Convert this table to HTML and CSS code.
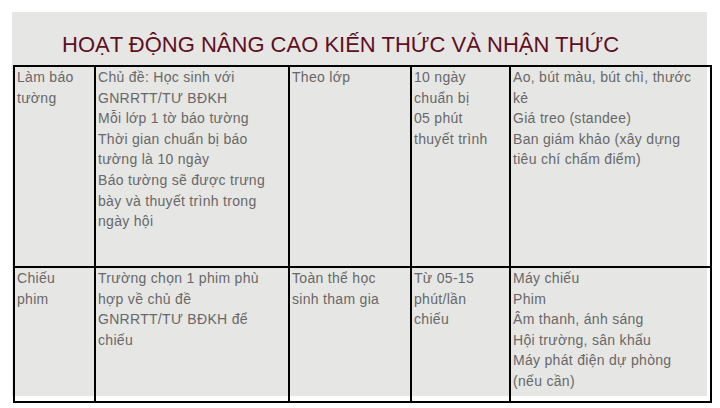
FILE: index.html
```html
<!DOCTYPE html>
<html lang="vi">
<head>
<meta charset="utf-8">
<link rel="stylesheet" href="styles.css">
</head>
<body>
<div class="slide">
  <h1 class="title">HOẠT ĐỘNG NÂNG CAO KIẾN THỨC VÀ NHẬN THỨC</h1>
  <table class="grid">
    <colgroup>
      <col class="c1"><col class="c2"><col class="c3"><col class="c4"><col class="c5">
    </colgroup>
    <tr class="r1">
      <td>Làm báo tường</td>
      <td>Chủ đề: Học sinh với GNRRTT/&#8288;TƯ BĐKH<br>Mỗi lớp 1 tờ báo tường<br>Thời gian chuẩn bị báo tường là 10 ngày<br>Báo tường sẽ được trưng bày và thuyết trình trong ngày hội</td>
      <td>Theo lớp</td>
      <td>10 ngày chuẩn bị<br>05 phút thuyết trình</td>
      <td>Ao, bút màu, bút chì, thước kẻ<br>Giá treo (standee)<br>Ban giám khảo (xây dựng tiêu chí chấm điểm)</td>
    </tr>
    <tr class="r2">
      <td>Chiếu phim</td>
      <td>Trường chọn 1 phim phù hợp về chủ đề GNRRTT/&#8288;TƯ BĐKH để chiếu</td>
      <td>Toàn thể học sinh tham gia</td>
      <td>Từ 05-15 phút/lần chiếu</td>
      <td>Máy chiếu<br>Phim<br>Âm thanh, ánh sáng<br>Hội trường, sân khấu<br>Máy phát điện dự phòng (nếu cần)</td>
    </tr>
  </table>
</div>
</body>
</html>
```
FILE: styles.css
```css
html, body {
  margin: 0;
  padding: 0;
  background: #ffffff;
}
.slide {
  margin: 12px 0 0 12px;
  width: 695px;
  background: linear-gradient(#e6e6e4 384px, #ffffff 384px);
  font-family: "Liberation Sans", Arial, sans-serif;
}
.title {
  margin: 0;
  height: 53px;
  box-sizing: border-box;
  padding: 20px 0 0 50px;
  font-size: 22px;
  font-weight: normal;
  line-height: 26px;
  color: #5e1022;
  white-space: nowrap;
}
.grid {
  border-collapse: collapse;
  table-layout: fixed;
  width: 697px;
  margin-left: 1px;
}
.c1 { width: 81px; }
.c2 { width: 194px; }
.c3 { width: 122px; }
.c4 { width: 99px; }
.c5 { width: 201px; }
.grid td {
  border: 2px solid #000;
  vertical-align: top;
  padding: 0 10px 0 2px;
  font-size: 14px;
  line-height: 20.6px;
  letter-spacing: 0.3px;
  color: #686868;
}
.r1 td { height: 199px; }
.r2 td { height: 133px; }
```
